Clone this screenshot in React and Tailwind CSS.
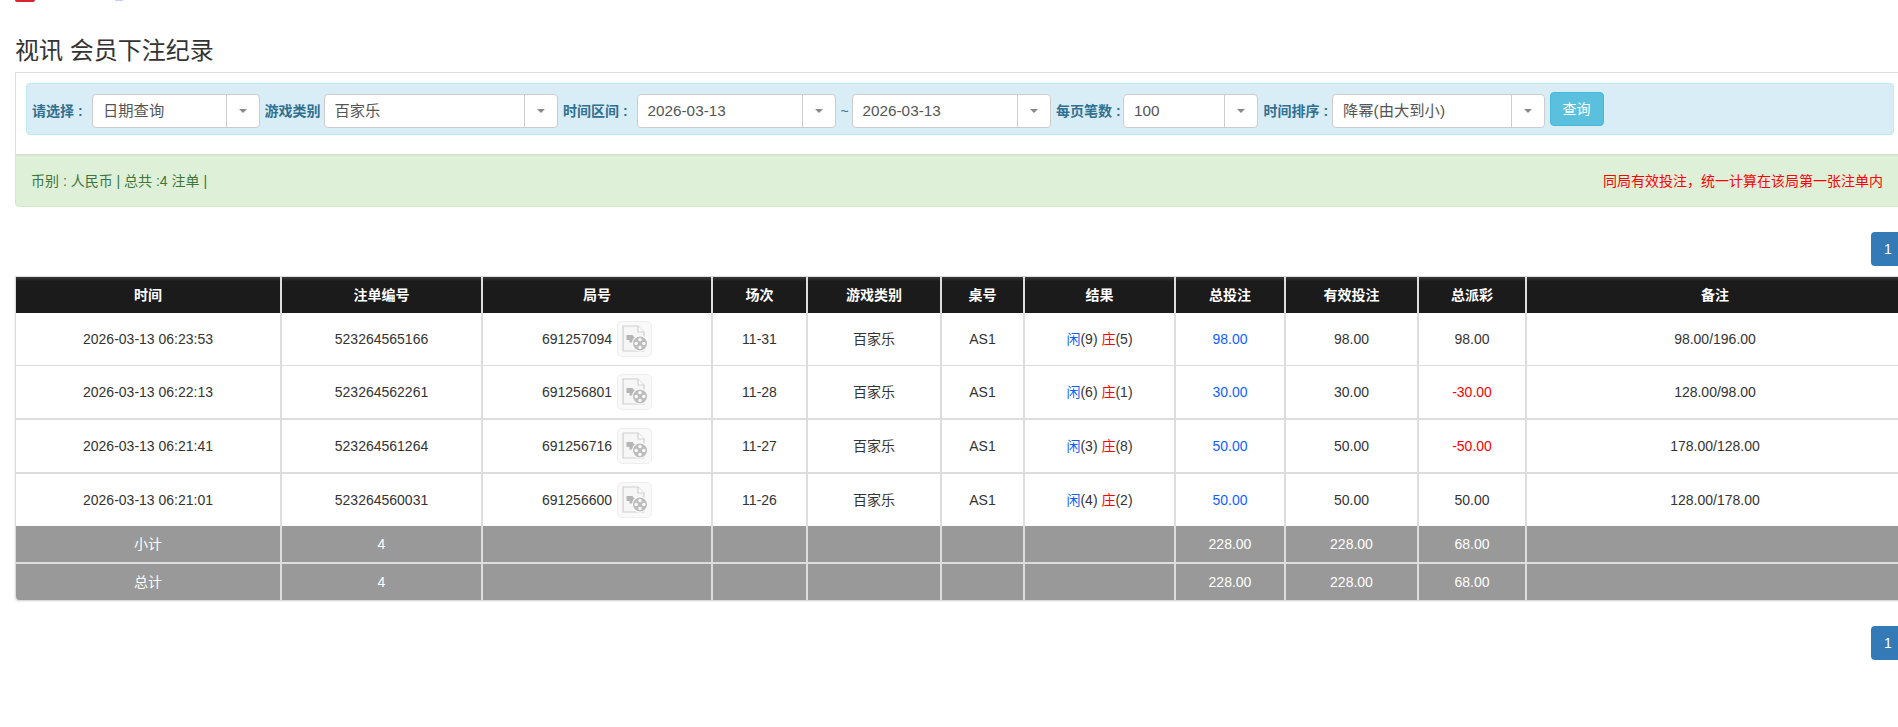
const ROWS = [
  { time: "2026-03-13 06:23:53", no: "523264565166", round: "691257094", shoe: "11-31", p: 9, b: 5, bet: "98.00", valid: "98.00", win: "98.00", note: "98.00/196.00", h: "h-[53px]", line: "border-b" },
  { time: "2026-03-13 06:22:13", no: "523264562261", round: "691256801", shoe: "11-28", p: 6, b: 1, bet: "30.00", valid: "30.00", win: "-30.00", note: "128.00/98.00", h: "h-[54px]", line: "border-b-2" },
  { time: "2026-03-13 06:21:41", no: "523264561264", round: "691256716", shoe: "11-27", p: 3, b: 8, bet: "50.00", valid: "50.00", win: "-50.00", note: "178.00/128.00", h: "h-[54px]", line: "border-b-2" },
  { time: "2026-03-13 06:21:01", no: "523264560031", round: "691256600", shoe: "11-26", p: 4, b: 2, bet: "50.00", valid: "50.00", win: "50.00", note: "128.00/178.00", h: "h-[52px]", line: "" },
];

const HEADERS = ["时间", "注单编号", "局号", "场次", "游戏类别", "桌号", "结果", "总投注", "有效投注", "总派彩", "备注"];

const TOTALS = [
  { label: "小计", h: "h-[38px]", line: "border-b-2" },
  { label: "总计", h: "h-[36px]", line: "" },
];

const Caret = () => (
  <svg width="8" height="4" viewBox="0 0 8 4" className="block">
    <path d="M0 0h8L4 4z" fill="#888" />
  </svg>
);

const Select = ({ value, width }) => (
  <div className={`flex h-[34px] mt-[10px] shrink-0 rounded border border-[#ccc] bg-white text-[15.3px] text-[#555] ${width}`}>
    <span className="flex-1 pl-[10px] leading-[32px] whitespace-nowrap">{value}</span>
    <span className="flex w-[33px] items-center justify-center border-l border-[#ccc]">
      <Caret />
    </span>
  </div>
);

const Label = ({ children, width, pl }) => (
  <span className={`shrink-0 mt-[10px] leading-[34px] font-bold text-[#31708f] whitespace-nowrap ${width} ${pl}`}>
    {children}
  </span>
);

const VideoIcon = () => (
  <span className="inline-flex h-[36px] w-[35px] items-center justify-center rounded-[5px] border border-[#eee] bg-[#f9f9f9]">
    <svg width="25" height="28" viewBox="0 0 25 28" className="block">
      <path d="M1 1h15l6 6v19H1z" fill="#f6f6f6" stroke="#cfcfcf" strokeWidth="1.2" />
      <path d="M16 1v6h6" fill="#fff" stroke="#cfcfcf" strokeWidth="1.2" />
      <path d="M4.5 10h6l1.5 2h3v5.5H7.5v-2.5h-3z" fill="#b5b5b5" />
      <circle cx="18" cy="18.5" r="7.6" fill="#bdbdbd" stroke="#fafafa" strokeWidth="1.2" />
      <circle cx="18" cy="14.6" r="1.7" fill="#fafafa" />
      <circle cx="18" cy="22.4" r="1.7" fill="#fafafa" />
      <circle cx="14.2" cy="18.5" r="1.7" fill="#fafafa" />
      <circle cx="21.8" cy="18.5" r="1.7" fill="#fafafa" />
    </svg>
  </span>
);

const Pager = () => (
  <div className="flex justify-end">
    <span className="h-[34px] w-[34px] rounded-l bg-[#337ab7] text-center leading-[34px] text-white">1</span>
  </div>
);

const Cell = ({ line, className = "", children }) => (
  <td className={`border-r-2 border-[#ddd] p-0 ${line} ${className}`}>{children}</td>
);

const App = () => {
  return (
    <div className="h-[727px] w-[1898px] overflow-hidden bg-white text-[14px] text-[#333] [font-family:'Liberation_Sans','Noto_Sans_CJK_SC',sans-serif]">
      {/* clipped top nav remnants */}
      <div className="flex h-[2px] items-start">
        <span className="ml-[15px] h-[2px] w-[20px] rounded-b-sm bg-[#d9232e]" />
        <span className="ml-[80px] h-px w-[8px] bg-[#c9cdfa]" />
      </div>

      <div className="ml-[15px] w-[1890px]">
        <h3 className="mt-[36px] text-[24px] leading-[26px] font-normal text-[#333]">视讯 会员下注纪录</h3>

        <div className="mt-[8px] h-[83px] border border-[#ddd] px-[10px] pt-[10px]">
          <div className="flex h-[52px] items-start rounded border border-[#bce8f1] bg-[#d9edf7] pl-[5px]">
            <Label width="w-[60px]">请选择 :</Label>
            <Select value="日期查询" width="w-[168px]" />
            <Label width="w-[63.5px]" pl="pl-[4.5px]">游戏类别</Label>
            <Select value="百家乐" width="w-[234px]" />
            <Label width="w-[79px]" pl="pl-[5.5px]">时间区间 :</Label>
            <Select value="2026-03-13" width="w-[199px]" />
            <span className="mt-[10px] w-[16px] shrink-0 pl-[5px] leading-[34px] text-[#31708f]">~</span>
            <Select value="2026-03-13" width="w-[199px]" />
            <Label width="w-[72.5px]" pl="pl-[5.5px]">每页笔数 :</Label>
            <Select value="100" width="w-[135px]" />
            <Label width="w-[74px]" pl="pl-[5.5px]">时间排序 :</Label>
            <Select value="降幂(由大到小)" width="w-[213px]" />
            <button className="mt-[8px] ml-[4.5px] h-[34px] w-[54px] shrink-0 rounded border border-[#46b8da] bg-[#5bc0de] text-white">
              查询
            </button>
          </div>
        </div>

        <div className="flex h-[52px] items-center justify-between rounded-b border border-[#d6e9c6] bg-[#dff0d8] pr-[21px] pl-[15px] text-[14px] text-[#3c763d]">
          <span>币别 : 人民币 | 总共 :4 注单 |</span>
          <span className="text-[#ff0000]">同局有效投注，统一计算在该局第一张注单内</span>
        </div>

        <div className="mt-[25px]">
          <Pager />
        </div>

        <div className="mt-[10px] overflow-hidden rounded-b border-t border-l border-[#ddd] shadow-[0_1px_2px_rgba(0,0,0,0.2)]">
          <table className="w-[1889px] table-fixed border-separate border-spacing-0 text-center text-[14px]">
            <colgroup>
              <col className="w-[266px]" />
              <col className="w-[201px]" />
              <col className="w-[230px]" />
              <col className="w-[95px]" />
              <col className="w-[134px]" />
              <col className="w-[83px]" />
              <col className="w-[151px]" />
              <col className="w-[110px]" />
              <col className="w-[133px]" />
              <col className="w-[108px]" />
              <col className="w-[378px]" />
            </colgroup>
            <thead>
              <tr className="h-[36px]">
                {HEADERS.map((h) => (
                  <th
                    key={h}
                    className="border-r-2 border-[#ddd] bg-gradient-to-b from-[#3a3a3a] from-0% to-[#1b1b1b] to-[12%] p-0 font-bold text-white"
                  >
                    {h}
                  </th>
                ))}
              </tr>
            </thead>
            <tbody>
              {ROWS.map((r) => (
                <tr key={r.no} className={r.h}>
                  <Cell line={r.line}>{r.time}</Cell>
                  <Cell line={r.line}>{r.no}</Cell>
                  <Cell line={r.line}>
                    <span className="inline-flex items-center gap-[5px] align-middle">
                      {r.round}
                      <VideoIcon />
                    </span>
                  </Cell>
                  <Cell line={r.line}>{r.shoe}</Cell>
                  <Cell line={r.line}>百家乐</Cell>
                  <Cell line={r.line}>AS1</Cell>
                  <Cell line={r.line}>
                    <span className="text-[#0f5fff]">闲</span>({r.p}) <span className="text-[#ff0000]">庄</span>({r.b})
                  </Cell>
                  <Cell line={r.line} className="text-[#0f5fff]">{r.bet}</Cell>
                  <Cell line={r.line}>{r.valid}</Cell>
                  <Cell line={r.line} className={r.win.startsWith("-") ? "text-[#ff0000]" : ""}>{r.win}</Cell>
                  <Cell line={r.line}>{r.note}</Cell>
                </tr>
              ))}
              {TOTALS.map((t) => (
                <tr key={t.label} className={`${t.h} bg-[#999] text-white`}>
                  <Cell line={t.line}>{t.label}</Cell>
                  <Cell line={t.line}>4</Cell>
                  <Cell line={t.line} />
                  <Cell line={t.line} />
                  <Cell line={t.line} />
                  <Cell line={t.line} />
                  <Cell line={t.line} />
                  <Cell line={t.line}>228.00</Cell>
                  <Cell line={t.line}>228.00</Cell>
                  <Cell line={t.line}>68.00</Cell>
                  <Cell line={t.line} />
                </tr>
              ))}
            </tbody>
          </table>
        </div>

        <div className="mt-[26px]">
          <Pager />
        </div>
      </div>
    </div>
  );
};

export default App;
